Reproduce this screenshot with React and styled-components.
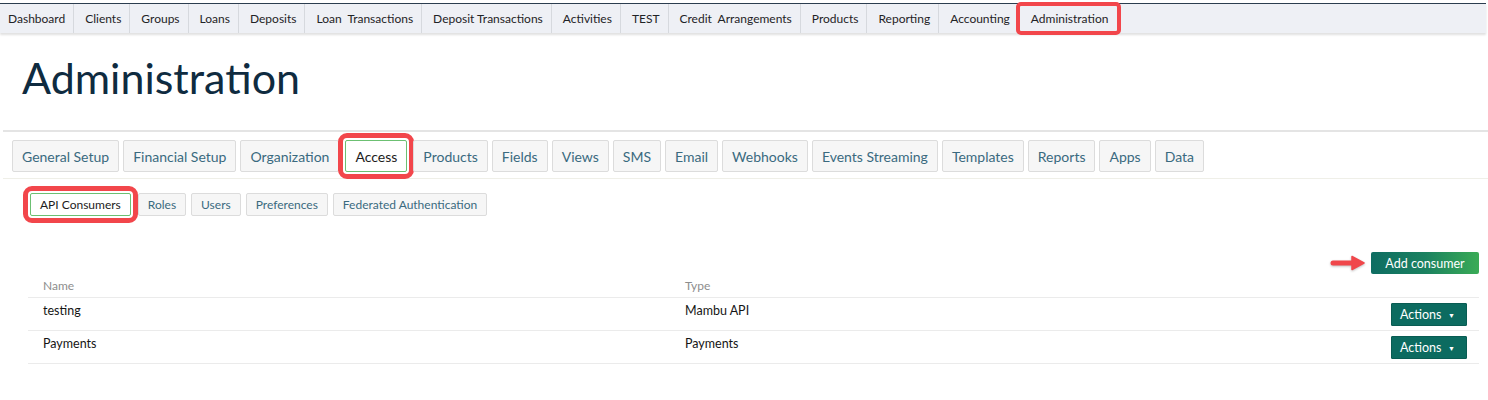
import React from 'react'
import styled, { createGlobalStyle, css } from 'styled-components'

const GlobalStyle = createGlobalStyle`
  body {
    margin: 0;
    background: #fff;
    font-family: Lato, 'Open Sans', sans-serif;
  }
`

const annotate = css`
  outline: 5px solid #f2464b;
  outline-offset: 2px;
  margin: 0 2px;
`

const TopNav = styled.nav`
  display: flex;
  align-items: stretch;
  height: 29px;
  margin: 3px 2px 0 0;
  border-top: 1px solid #2b3d4f;
  background: #eef0f5;
  box-shadow: 0 2px 2px rgba(0, 0, 0, 0.12);
`

const NavItem = styled.a`
  display: flex;
  align-items: center;
  padding: 0 8px 0 11px;
  font-size: 12px;
  color: #1f2326;
  white-space: pre;
  border-left: 1px solid #d6d9de;

  &:first-child {
    padding-left: 8px;
    border-left: none;
  }

  ${(p) =>
    p.$marked &&
    css`
      padding: 0 11px 0 12px;
      outline: 4px solid #f2464b;
      outline-offset: -2px;
      border-radius: 3px;
    `}
`

const Title = styled.h1`
  margin: 19px 0 26px;
  padding-left: 22px;
  font-size: 43px;
  line-height: 52px;
  font-weight: 400;
  color: #0f2b40;
`

const TabBar = styled.div`
  display: flex;
  gap: 4px;
  padding: 8px 0 6px 9px;
  margin-left: 3px;
  border-top: 2px solid #e4e4e4;
  border-bottom: 1px solid #efefe8;
`

const Tab = styled.div`
  display: flex;
  align-items: center;
  height: 32px;
  box-sizing: border-box;
  padding: 0 9px;
  font-size: 14px;
  color: #3a6a7f;
  background: #f6f6f6;
  border: 1px solid #dcdcdc;
  border-radius: 2px;

  ${(p) =>
    p.$active &&
    css`
      color: #1c1c1c;
      background: #fff;
      border-color: #6cc072;
      ${annotate}
    `}
`

const SubTabBar = styled.div`
  display: flex;
  gap: 5px;
  padding: 14px 0 0 28px;
`

const SubTab = styled(Tab)`
  height: 23px;
  padding: 0 9px;
  font-size: 12px;
`

const Content = styled.section`
  padding: 36px 9px 0 28px;
`

const Toolbar = styled.div`
  display: flex;
  justify-content: flex-end;
  align-items: center;
  gap: 5px;
`

const AddButton = styled.button`
  height: 22px;
  width: 108px;
  border: none;
  border-radius: 2px;
  font-family: inherit;
  font-size: 12.5px;
  color: #fff;
  background: linear-gradient(90deg, #0e6d62 0%, #1b8160 50%, #3aab56 100%);
`

const Row = styled.div`
  display: grid;
  grid-template-columns: 642px 1fr auto;
  align-items: start;
  padding: ${(p) => (p.$head ? '0 12px 0 15px' : '5px 12px 4px 15px')};
  height: ${(p) => (p.$head ? '23px' : 'auto')};
  align-content: center;
  border-bottom: 1px solid #ebebeb;
  font-size: ${(p) => (p.$head ? '12px' : '12.5px')};
  color: ${(p) => (p.$head ? '#8d8d8d' : '#151515')};
`

const Cell = styled.span`
  line-height: 16px;
`

const ActionsButton = styled.button`
  display: flex;
  align-items: center;
  justify-content: space-between;
  width: 76px;
  height: 23px;
  padding: 0 8px;
  border: 1px solid #095c53;
  border-radius: 1px;
  background: #0c6b60;
  color: #fff;
  font-family: inherit;
  font-size: 12.5px;

  span {
    font-size: 7px;
    margin-right: 3px;
  }
`

const Arrow = () => (
  <svg width="36" height="16" viewBox="0 0 36 16" style={{ filter: 'drop-shadow(0 1px 1px rgba(0,0,0,0.25))' }}>
    <line x1="3" y1="8" x2="24" y2="8" stroke="#f0474b" strokeWidth="5" strokeLinecap="round" />
    <path d="M22 1.5 L34 8 L22 14.5 Z" fill="#f0474b" stroke="#f0474b" strokeWidth="1.5" strokeLinejoin="round" />
  </svg>
)

const navItems = [
  'Dashboard', 'Clients', 'Groups', 'Loans', 'Deposits', 'Loan  Transactions',
  'Deposit Transactions', 'Activities', 'TEST', 'Credit  Arrangements', 'Products',
  'Reporting', 'Accounting', 'Administration',
]

const tabs = [
  'General Setup', 'Financial Setup', 'Organization', 'Access', 'Products', 'Fields',
  'Views', 'SMS', 'Email', 'Webhooks', 'Events Streaming', 'Templates', 'Reports', 'Apps', 'Data',
]

const subTabs = ['API Consumers', 'Roles', 'Users', 'Preferences', 'Federated Authentication']

const consumers = [
  { name: 'testing', type: 'Mambu API' },
  { name: 'Payments', type: 'Payments' },
]

const App = () => {
  return (
    <>
      <GlobalStyle />
      <TopNav>
        {navItems.map((item) => (
          <NavItem key={item} $marked={item === 'Administration'}>
            {item}
          </NavItem>
        ))}
      </TopNav>

      <Title>Administration</Title>

      <TabBar>
        {tabs.map((t) => (
          <Tab key={t} $active={t === 'Access'}>
            {t}
          </Tab>
        ))}
      </TabBar>

      <SubTabBar>
        {subTabs.map((t) => (
          <SubTab key={t} $active={t === 'API Consumers'}>
            {t}
          </SubTab>
        ))}
      </SubTabBar>

      <Content>
        <Toolbar>
          <Arrow />
          <AddButton>Add consumer</AddButton>
        </Toolbar>
        <Row $head>
          <Cell>Name</Cell>
          <Cell>Type</Cell>
          <span />
        </Row>
        {consumers.map((c) => (
          <Row key={c.name}>
            <Cell>{c.name}</Cell>
            <Cell>{c.type}</Cell>
            <ActionsButton>
              Actions <span>▼</span>
            </ActionsButton>
          </Row>
        ))}
      </Content>
    </>
  )
}

export default App
